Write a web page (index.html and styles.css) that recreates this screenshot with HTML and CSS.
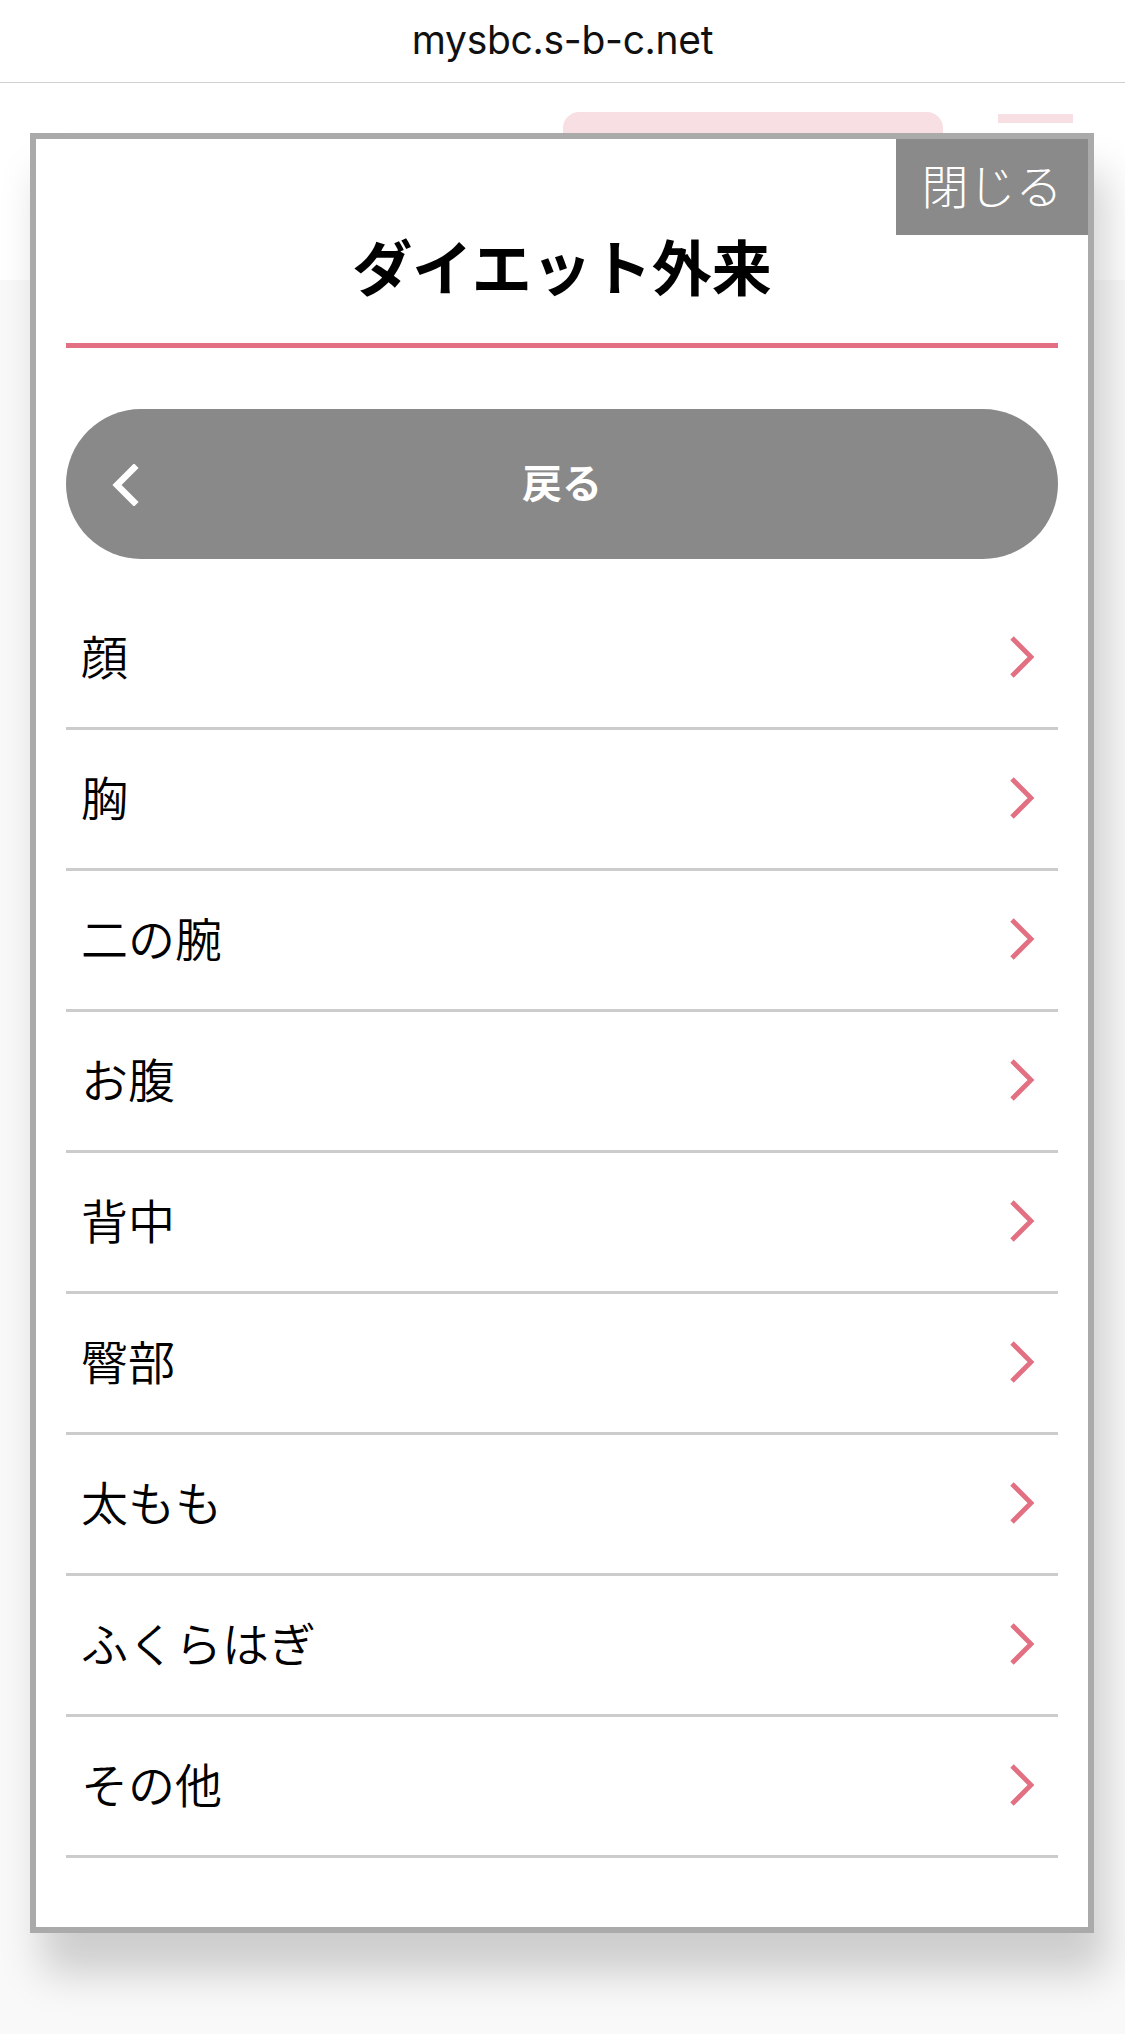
FILE: index.html
```html
<!DOCTYPE html>
<html lang="ja">
<head>
<meta charset="utf-8">
<title>ダイエット外来</title>
<link rel="stylesheet" href="styles.css">
</head>
<body>
<header class="urlbar">mysbc.s-b-c.net</header>
<div class="page-top">
  <div class="pill">お客様番号連携済み</div>
  <div class="menu-bar"></div>
</div>

<div class="modal">
  <button class="close">閉じる</button>
  <h1 class="title">ダイエット外来</h1>
  <button class="back">
    <svg class="back-icon" width="30" height="42" viewBox="0 0 30 42"><path d="M24 4 L7 21 L24 38" fill="none" stroke="#fff" stroke-width="6.5" stroke-linecap="square" stroke-linejoin="miter"/></svg>
    <span class="back-label">戻る</span>
    <span></span>
  </button>
  <ul class="list">
    <li class="row"><span>顔</span><svg class="chev" width="28" height="44" viewBox="0 0 28 44"><path d="M4 3 L23 22 L4 41" fill="none" stroke="#e26f82" stroke-width="4.8"/></svg></li>
    <li class="row"><span>胸</span><svg class="chev" width="28" height="44" viewBox="0 0 28 44"><path d="M4 3 L23 22 L4 41" fill="none" stroke="#e26f82" stroke-width="4.8"/></svg></li>
    <li class="row"><span>二の腕</span><svg class="chev" width="28" height="44" viewBox="0 0 28 44"><path d="M4 3 L23 22 L4 41" fill="none" stroke="#e26f82" stroke-width="4.8"/></svg></li>
    <li class="row"><span>お腹</span><svg class="chev" width="28" height="44" viewBox="0 0 28 44"><path d="M4 3 L23 22 L4 41" fill="none" stroke="#e26f82" stroke-width="4.8"/></svg></li>
    <li class="row"><span>背中</span><svg class="chev" width="28" height="44" viewBox="0 0 28 44"><path d="M4 3 L23 22 L4 41" fill="none" stroke="#e26f82" stroke-width="4.8"/></svg></li>
    <li class="row"><span>臀部</span><svg class="chev" width="28" height="44" viewBox="0 0 28 44"><path d="M4 3 L23 22 L4 41" fill="none" stroke="#e26f82" stroke-width="4.8"/></svg></li>
    <li class="row"><span>太もも</span><svg class="chev" width="28" height="44" viewBox="0 0 28 44"><path d="M4 3 L23 22 L4 41" fill="none" stroke="#e26f82" stroke-width="4.8"/></svg></li>
    <li class="row"><span>ふくらはぎ</span><svg class="chev" width="28" height="44" viewBox="0 0 28 44"><path d="M4 3 L23 22 L4 41" fill="none" stroke="#e26f82" stroke-width="4.8"/></svg></li>
    <li class="row"><span>その他</span><svg class="chev" width="28" height="44" viewBox="0 0 28 44"><path d="M4 3 L23 22 L4 41" fill="none" stroke="#e26f82" stroke-width="4.8"/></svg></li>
  </ul>
</div>
</body>
</html>
```

FILE: styles.css
```css
* { box-sizing: border-box; }

html, body {
  margin: 0;
  padding: 0;
}

body {
  width: 1125px;
  height: 2034px;
  overflow: hidden;
  background: #f9f9f9;
  font-family: "Noto Sans CJK JP", "Noto Sans", sans-serif;
  position: relative;
}

.urlbar {
  height: 83px;
  background: #fff;
  border-bottom: 1px solid #d0d0d0;
  display: flex;
  align-items: center;
  justify-content: center;
  padding-bottom: 4px;
  font-family: "Inter", "Liberation Sans", sans-serif;
  font-size: 39px;
  color: #111;
  letter-spacing: -0.3px;
}

.page-top {
  height: 197px;
  background: #fff;
  display: flex;
  justify-content: flex-end;
  align-items: flex-start;
  gap: 55px;
  padding: 29px 52px 0 0;
}

.pill {
  width: 380px;
  height: 72px;
  border-radius: 16px;
  background: #f8dfe3;
  color: #fff;
  font-size: 29px;
  font-weight: 700;
  text-align: center;
  padding-top: 15px;
}

.menu-bar {
  width: 75px;
  height: 9px;
  margin-top: 2px;
  background: #f8dfe3;
}

.modal {
  position: absolute;
  top: 133px;
  left: 30px;
  width: 1064px;
  height: 1800px;
  background: #fff;
  border: 6px solid #aaaaaa;
  padding: 0 30px 69px;
  box-shadow: 12px 40px 40px rgba(0, 0, 0, 0.18);
}

.close {
  position: absolute;
  top: 0;
  right: 0;
  width: 192px;
  height: 96px;
  border: none;
  margin: 0;
  padding: 0 0 8px;
  background: #8a8a8a;
  color: #fff;
  font-family: "Noto Sans CJK JP", sans-serif;
  font-size: 47px;
  font-weight: 300;
  letter-spacing: 0;
}

.title {
  margin: 0;
  padding: 90px 0 42px;
  line-height: 72px;
  font-size: 60px;
  font-weight: 700;
  text-align: center;
  color: #000;
  border-bottom: 5px solid #e26f82;
}

.back {
  display: grid;
  grid-template-columns: 1fr auto 1fr;
  align-items: center;
  width: 100%;
  height: 150px;
  margin-top: 61px;
  padding: 0 0 0 44px;
  border: none;
  border-radius: 75px;
  background: #898989;
  color: #fff;
  font-family: "Noto Sans CJK JP", sans-serif;
  font-size: 40px;
  font-weight: 700;
}

.back-icon {
  display: block;
  margin-top: 2px;
}

.back-label {
  line-height: 1;
  margin-left: -44px;
  padding-bottom: 6px;
}

.list {
  list-style: none;
  margin: 30px 0 0;
  padding: 0;
}

.row {
  height: 141px;
  border-bottom: 3px solid #cccccc;
  display: flex;
  align-items: center;
  justify-content: space-between;
  padding: 0 22px 7px 15px;
  font-size: 47px;
  font-weight: 350;
  color: #000;
}

.chev {
  display: block;
  margin-top: 4px;
}
```
